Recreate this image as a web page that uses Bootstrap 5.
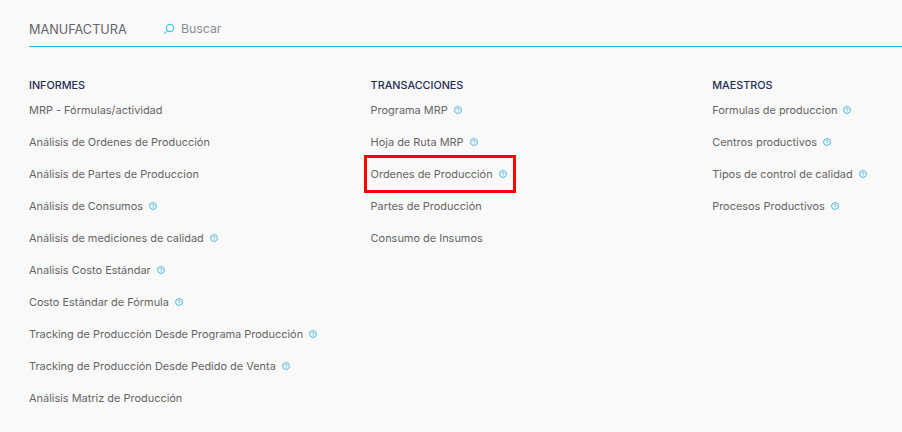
<!DOCTYPE html>
<html lang="es">
<head>
    <meta charset="UTF-8">
    <title>Manufactura</title>
    <link href="https://cdn.jsdelivr.net/npm/bootstrap@5.3.0/dist/css/bootstrap.min.css" rel="stylesheet">
    <style>
        body { font-family: Inter, "Open Sans", sans-serif; background-color: #f9f9f9; color: #5c5c5c; overflow: hidden; }
        .menu-wrap { padding-left: 29px; }
        .menu-head { height: 47px; padding-top: 12px; border-bottom: 1px solid #1cb6d8; }
        .menu-title { width: 134px; font-size: 12.7px; color: #62656b; padding-top: 1px; }
        .menu-search { font-size: 12.3px; color: #8a8d92; gap: 6px; }
        .menu-cols { padding-top: 30px; }
        .menu-col { flex: 0 0 341.6px; }
        .menu-col:last-child { flex: 1 1 0; min-width: 0; }
        .col-title { font-size: 10.8px; font-weight: 500; color: #262c55; line-height: 17px; height: 17px; }
        .menu-row { height: 32px; padding-top: 1px; font-size: 10.95px; color: #656565; gap: 6px; position: relative; width: max-content; }
        .help-ico { width: 8px; height: 8px; flex: none; margin-top: -1px; }
        .red-box { position: absolute; left: -7px; top: -3px; right: -9px; bottom: -3px; border: 3px solid #f00; }
    </style>
</head>
<body>
<div class="menu-wrap">
    <div class="menu-head d-flex align-items-center">
        <div class="menu-title">MANUFACTURA</div>
        <div class="menu-search d-flex align-items-center">
            <svg width="12" height="12" viewBox="0 0 12 12" fill="none" stroke="#3cc4ee" stroke-width="1.1"><circle cx="7" cy="5" r="3.6"/><path d="M4.4 7.6 1.2 10.8"/></svg>
            <span>Buscar</span>
        </div>
    </div>
    <div class="menu-cols d-flex" id="cols"></div>
</div>
<script src="https://cdn.jsdelivr.net/npm/bootstrap@5.3.0/dist/js/bootstrap.bundle.min.js"></script>
<script>
    const helpIcon = '<svg class="help-ico" viewBox="0 0 9 9" fill="none" stroke="#3ab0d2" stroke-width="1"><circle cx="4.5" cy="4.5" r="3.9"/><path d="M3.3 3.7c0-1.5 2.4-1.5 2.4 0 0 .9-1.2.9-1.2 1.7" stroke-width=".9"/><path d="M4.5 6.2v.7" stroke-width=".9"/></svg>';
    // [text, has help icon, boxed]
    const data = [
        ['INFORMES', [
            ['MRP - Fórmulas/actividad'],
            ['Análisis de Ordenes de Producción'],
            ['Análisis de Partes de Produccion'],
            ['Análisis de Consumos', 1],
            ['Análisis de mediciones de calidad', 1],
            ['Analisis Costo Estándar', 1],
            ['Costo Estándar de Fórmula', 1],
            ['Tracking de Producción Desde Programa Producción', 1],
            ['Tracking de Producción Desde Pedido de Venta', 1],
            ['Análisis Matriz de Producción']
        ]],
        ['TRANSACCIONES', [
            ['Programa MRP', 1],
            ['Hoja de Ruta MRP', 1],
            ['Ordenes de Producción', 1, 1],
            ['Partes de Producción'],
            ['Consumo de Insumos']
        ]],
        ['MAESTROS', [
            ['Formulas de produccion', 1],
            ['Centros productivos', 1],
            ['Tipos de control de calidad', 1],
            ['Procesos Productivos', 1]
        ]]
    ];
    document.getElementById('cols').innerHTML = data.map(c => `
        <div class="menu-col">
            <div class="col-title">${c[0]}</div>
            ${c[1].map(r => `<div class="menu-row d-flex align-items-center"><span>${r[0]}</span>${r[1] ? helpIcon : ''}${r[2] ? '<div class="red-box"></div>' : ''}</div>`).join('')}
        </div>`).join('');
</script>
</body>
</html>
